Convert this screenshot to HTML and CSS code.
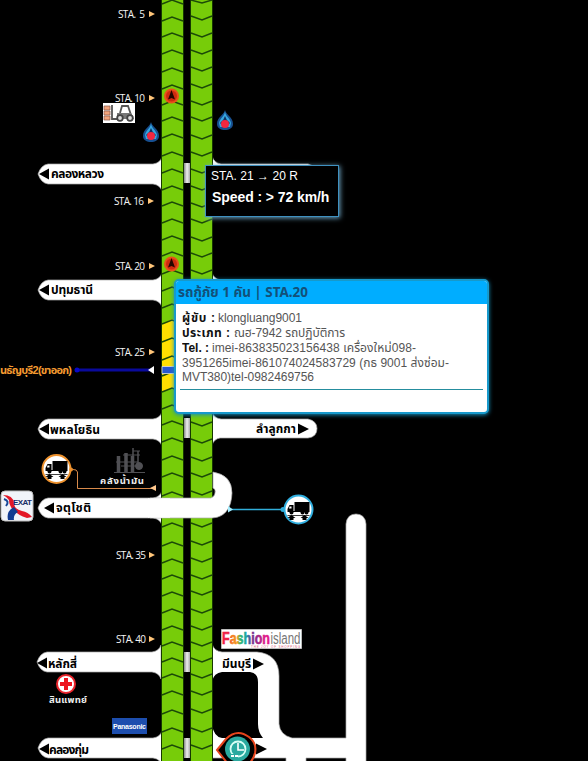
FILE: index.html
```
<!DOCTYPE html>
<html lang="th">
<head>
<meta charset="utf-8">
<title>Expressway map</title>
<link rel="stylesheet" href="styles.css">
</head>
<body>
<main class="map">
<svg class="canvas" width="588" height="761" viewBox="0 0 588 761">
  <defs>
    <path id="branch" d="M162 -17Q160 -11 153 -10H48Q41 -9 38 0Q41 9 48 10H153Q160 11 162 17Z"/>
    <path id="left-arrow" d="M0 0l10-5.500v11z"/>
    <path id="right-arrow" d="M0 0l-11-5.500v11z"/>
    <path id="station" d="M0-3l6 3-6 3z"/>
    <linearGradient id="bridge"><stop offset="0" stop-color="#888"/><stop offset=".5" stop-color="#eee"/><stop offset="1" stop-color="#aaa"/></linearGradient>
    <linearGradient id="rainbow"><stop offset=".14" stop-color="#ef2045"/><stop offset=".2" stop-color="#f37a24"/><stop offset=".32" stop-color="#f39a20"/><stop offset=".38" stop-color="#36b56a"/><stop offset=".5" stop-color="#19a6a8"/><stop offset=".62" stop-color="#70308f"/><stop offset=".75" stop-color="#a02888"/><stop offset=".9" stop-color="#e21888"/></linearGradient>
    <g id="rescue"><circle r="7.500" fill="#e9501a"/><circle r="5.500" fill="#cf2a10"/><path d="M0-6l3.500 9.500L0 2-3.500 3.500z" fill="#250500"/></g>
    <g id="flame"><path d="M0-10C1-5 8-3 8 4C8 8 4 10 0 10S-8 8-8 4C-8-3-1-5 0-10Z" fill="#174f90"/><path d="M0-9C0-4 5-2 6 3L5 7H-5L-6 3C-5-2 0-4 0-9Z" fill="#36a7df"/><path d="M0-4Q1 0 5 3L0 8-5 3Q-1 0 0-4Z" fill="#123060"/><circle cy="4" r="4" fill="#f22740"/></g>
    <g id="truck"><path d="M-4-8H11V1H-4zM-11-1l2-4h4v6h-6z"/><path d="M-9-3.500h2v2h-2.500z" fill="#fff"/><path d="M-11 1H11v1H-11zM-11 5H11v.8H-11z"/><circle cx="-7" cy="2.500" r="2"/><circle cx="4" cy="2.500" r="2"/><circle cx="8" cy="2.500" r="2"/><path d="M-7 5l4 3h-2v2h-4V8h-2zM6 5l4 3H8v2H4V8H2z"/></g>
  </defs>
  <g class="branch">
    <use href="#branch" y="174"/><use href="#branch" y="290"/><use href="#branch" y="429"/><use href="#branch" y="508"/><use href="#branch" y="662" x="-1"/><use href="#branch" y="748"/>
    <path d="M212 156Q214 163 221 164H308Q316 166 318 174Q316 183 308 184H212Z"/>
    <path d="M212 273Q214 279 221 280H318V299H212Z"/>
    <path d="M212 412Q214 418 221 419H308Q317 421 317 428.500Q317 437 308 438H220Q214 439 212 445Z"/>
    <path d="M212 644Q214 651 222 652H257Q279 654 279 676V724Q280 735 292 738H346V524Q347 514 356 514Q365 514 366 524V762H346V758H306V762H286V758H212Z"/>
  </g>
  <path d="M212 725Q214 737 222 738H263Q258 732 258 724V682Q258 673 250 672H222Q214 673 212 681Z"/>
  <g fill="#77cc09" stroke="#163800">
    <path d="M161.500-1h22v763h-22zM190.500-1h22v763h-22z"/>
  </g>
  <path fill="#ffe000" d="M162 324l10-5 11 4v67l-11-2-10 4z"/>
  <path class="chevrons" d="M162 4l10-4 11 4M162 21l10-4 11 4M162 37l10-4 11 4M162 54l10-4 11 4M162 72l10-4 11 4M162 89l10-4 11 4M162 105l10-4 11 4M162 121l10-4 11 4M162 138l10-4 11 4M162 156l10-4 11 4M162 173l10-4 11 4M162 190l10-4 11 4M162 206l10-4 11 4M162 223l10-4 11 4M162 240l10-4 11 4M162 256l10-4 11 4M162 274l10-4 11 4M162 291l10-4 11 4M162 308l10-4 11 4M162 324l10-4 11 4M162 342l10-4 11 4M162 360l10-4 11 4M162 376l10-4 11 4M162 392l10-4 11 4M162 409l10-4 11 4M162 425l10-4 11 4M162 442l10-4 11 4M162 460l10-4 11 4M162 477l10-4 11 4M162 496l10-4 11 4M162 527l10-4 11 4M162 546l10-4 11 4M162 563l10-4 11 4M162 579l10-4 11 4M162 596l10-4 11 4M162 613l10-4 11 4M162 630l10-4 11 4M162 646l10-4 11 4M162 662l10-4 11 4M162 678l10-4 11 4M162 695l10-4 11 4M162 714l10-4 11 4M162 732l10-4 11 4M162 749l10-4 11 4"/>
  <path class="chevrons" d="M191 0l11 3 10-3M191 16l11 4 10-4M191 33l11 4 10-4M191 50l11 4 10-4M191 67l11 4 10-4M191 84l11 4 10-4M191 101l11 4 10-4M191 117l11 4 10-4M191 135l11 4 10-4M191 152l11 4 10-4M191 169l11 4 10-4M191 186l11 4 10-4M191 203l11 4 10-4M191 219l11 4 10-4M191 237l11 4 10-4M191 253l11 4 10-4M191 270l11 4 10-4M191 422l11 4 10-4M191 439l11 4 10-4M191 457l11 4 10-4M191 473l11 4 10-4M191 491l11 4 10-4M191 523l11 4 10-4M191 541l11 4 10-4M191 558l11 4 10-4M191 575l11 4 10-4M191 591l11 4 10-4M191 609l11 4 10-4M191 626l11 4 10-4M191 642l11 4 10-4M191 658l11 4 10-4M191 674l11 4 10-4M191 691l11 4 10-4M191 709l11 4 10-4M191 728l11 4 10-4M191 745l11 4 10-4"/>
  <path fill="url(#bridge)" d="M184 163h6v20h-6zM184 418h6v20h-6zM184 652h6v20h-6zM184 738h6v20h-6z"/>
  <path class="ramp" d="M150 498H211Q215 496 215 493Q216 489 213 488V472Q232 475 232 493Q231 517 212 518H150Z"/>
  <path fill="#fff" d="M148 498.400h22v19.200h-22z"/>

  <use href="#left-arrow" x="39" y="174"/><use href="#left-arrow" x="39" y="290"/><use href="#left-arrow" x="39" y="429"/><use href="#left-arrow" x="44" y="508"/><use href="#left-arrow" x="37" y="663"/><use href="#left-arrow" x="39" y="749"/>
  <use href="#right-arrow" x="309" y="429"/><use href="#right-arrow" x="264" y="664"/><use href="#right-arrow" x="267" y="749"/>
  <g class="road-name">
    <text x="51" y="178" textLength="53">คลองหลวง</text><text x="51" y="294" textLength="42">ปทุมธานี</text><text x="50" y="434" textLength="50">พหลโยธิน</text><text x="56" y="512" textLength="35">จตุโชติ</text><text x="48" y="668" textLength="29">หลักสี่</text><text x="49" y="754" textLength="40">คลองกุ่ม</text><text x="256" y="433" textLength="40">ลำลูกกา</text><text x="222" y="668" textLength="29">มีนบุรี</text>
  </g>
  <g class="station-name">
    <text x="118" y="17.500" textLength="27" xml:space="preserve">STA.  5</text><text x="115" y="101.500" textLength="30">STA. 10</text><text x="114" y="204.500" textLength="30">STA. 16</text><text x="115" y="269.500" textLength="30">STA. 20</text><text x="115" y="355.500" textLength="30">STA. 25</text><text x="116" y="558.500" textLength="30">STA. 35</text><text x="116" y="642.500" textLength="30">STA. 40</text>
  </g>
  <g fill="#ffc579"><use href="#station" x="149" y="14"/><use href="#station" x="149" y="98"/><use href="#station" x="148" y="201"/><use href="#station" x="149" y="266"/><use href="#station" x="149" y="352"/><use href="#station" x="149" y="555"/><use href="#station" x="149" y="639"/></g>

  <use href="#rescue" x="171.500" y="96"/><use href="#rescue" x="171.500" y="264"/><use href="#flame" x="151" y="132"/><use href="#flame" x="225" y="120"/>
  <g transform="translate(103 103)"><path fill="#fff" d="M0 0h32v20H0z"/><path fill="#f0a27a" stroke="#865647" stroke-width=".7" d="M1 3h6v4H1zM1 8h6v4H1zM1 13h6v4H1z"/><path fill="none" stroke="#555" stroke-width="1.800" d="M9 2v14h5M17 10l2-7h6l3 9M14 13h14"/><path fill="#777" d="M14 10h14l3 6H14z"/><g fill="#ddd" stroke="#444" stroke-width="1.800"><circle cx="17" cy="15" r="2.800"/><circle cx="27" cy="15" r="2.800"/></g></g>
  <text class="route-name" x="0" y="374" textLength="72">นธัญบุรี2(ขาออก)</text>
  <path stroke="#0a0a9c" stroke-width="3" d="M76 370h76"/><circle cx="77" cy="370" r="2.500" fill="#0808c8"/><path fill="#fff" d="M148 370l6-4v8z"/><path fill="#2858ce" stroke="#ddd" stroke-width=".8" d="M162 366.500h21v7h-21z"/>
  <g fill="none" stroke="#d98a4a"><path d="M70 469l6 1 1.500 2v16.500H154"/></g><path fill="#ffc78d" d="M150 488l6-3v6z"/>
  <circle cx="56.500" cy="469" r="14" fill="#fff" stroke="#ed912d" stroke-width="2"/><use href="#truck" x="56.500" y="469"/><circle cx="71" cy="469.500" r="2" fill="#ed912d"/>
  <path stroke="#31aeda" stroke-width="1.300" d="M230 509.500h54"/><path fill="#a5edff" d="M228 506l5 3.500-5 3z"/><circle cx="283" cy="509.500" r="2.500" fill="#31aeda"/><circle cx="298.500" cy="509.500" r="14" fill="#fff" stroke="#30afe0" stroke-width="2"/><use href="#truck" x="298.500" y="510"/>
  <g fill="none" stroke="#505054"><path stroke-width="3.500" d="M118.500 472v-16M126 472v-19M132.500 472v-16"/><path d="M114 472.500h31M116 462h22M121 466h18M123 455h17M133 451h7"/><path stroke-width="1.500" d="M133 472v-24M138 464v-13"/><circle cx="139" cy="466" r="3.500" fill="#505054"/></g>
  <text class="small-name" x="100" y="484" textLength="44">คลังน้ำมัน</text>
  <g><rect x="1" y="491" width="32" height="30" rx="4" fill="#f1f4fa" stroke="#bbb"/><path d="M3 495Q13 495 14 503Q14 509 22 511Q28 512 32 517L27 518Q18 515 13 510Q9 505 9 500Q7 497 3 495Z" fill="#e31728"/><path d="M8 520Q6 511 14 507L18 512Q13 515 14 520Z" fill="#123b91"/><path d="M4 499Q10 501 6 506" fill="none" stroke="#174798" stroke-width="2"/><text class="exat" x="13" y="505" textLength="19">EXAT</text></g>
  <circle cx="66" cy="684" r="9" fill="#fff" stroke="#e9242b" stroke-width="2"/><path d="M64 678h4v4h4v4h-4v4h-4v-4h-4v-4h4z" fill="#ed1620"/><text class="small-name" x="49" y="703" textLength="38">สินแพทย์</text>
  <path d="M112 718h35v16h-35z" fill="#1d4eae"/><text class="panasonic" x="113" y="729" textLength="33">Panasonic</text>
  <path fill="#fff" stroke="#bbb" d="M221.500 629.500h80v19h-80z"/><text class="fashion" x="222" y="644" textLength="48" lengthAdjust="spacingAndGlyphs">Fashion</text><text class="island" x="270.500" y="644" textLength="30" lengthAdjust="spacingAndGlyphs">island</text><text class="slogan" x="251" y="648" textLength="49">THE JOY OF SHOPPING</text>
  <path d="M217 750L226 739Q237 728 249 737Q257 743 255 753Q253 761 248 764H228Z" stroke="#e5441c" stroke-width="2"/><circle cx="237.500" cy="749" r="12.500" fill="#2aa99f"/><circle cx="238" cy="749" r="7.500" fill="none" stroke="#d7fff5" stroke-width="1.800"/><path d="M238 743v7h6" fill="none" stroke="#fff" stroke-width="1.600"/><path d="M230 754h8v5h-8z" fill="#2aa99f"/><path d="M231 756h3m1 0h3" stroke="#fff" stroke-width="2"/>
</svg>
<aside class="speed"><div>STA. 21 → 20 R</div><strong>Speed : &gt; 72 km/h</strong></aside>
<section class="info">
  <h1><svg width="134" height="20"><text x="1" y="15" textLength="130" lengthAdjust="spacingAndGlyphs">รถกู้ภัย 1 คัน | STA.20</text></svg></h1>
  <div class="details">
    <svg width="275" height="76"><g><text y="12" textLength="33" class="label">ผู้ขับ :</text><text x="36" y="12" textLength="84">klongluang9001</text><text y="27" textLength="48" class="label">ประเภท :</text><text x="52" y="27" textLength="111">ณฮ-7942 รถปฏิบัติการ</text><text y="42" textLength="27" class="label">Tel. :</text><text x="30" y="42" textLength="204">imei-863835023156438 เครื่องใหม่098-</text><text y="57" textLength="267">3951265imei-861074024583729 (กธ 9001 ส่งซ่อม-</text><text y="71" textLength="132">MVT380)tel-0982469756</text></g></svg>
  </div>
</section>
</main>
</body>
</html>
```
FILE: styles.css
```
* { box-sizing: border-box; }
body { margin: 0; background: #000; font-family: "Liberation Sans", "Noto Sans Thai", Arial, sans-serif; }
.map { position: relative; width: 588px; height: 761px; overflow: hidden; background: #000; }
.canvas { display: block; }
.branch, .ramp { fill: #fff; stroke: #aaa; stroke-width: .7; }
.chevrons { fill: none; stroke: #1c4a08; stroke-width: 1.4; }
.road-name { font-size: 12px; font-weight: bold; }
.station-name { fill: #f4f4f4; font: 10px "Open Sans", sans-serif; }
.route-name { fill: #f39a30; font-size: 11px; font-weight: bold; }
.small-name { fill: #eee; font-size: 9.5px; font-weight: bold; }
.exat { fill: #172c67; font-size: 8px; font-weight: bold; }
.panasonic { fill: #fff; font-size: 7px; font-weight: bold; }
.fashion { fill: url(#rainbow); stroke: url(#rainbow); stroke-width: .6; font-size: 17px; font-weight: bold; }
.island { fill: #777; font-size: 16px; }
.slogan { fill: #dc5b7e; font-size: 3px; }
.speed { position: absolute; left: 205px; top: 165px; width: 134px; height: 52px; padding: 3px 5px; border: 1px solid #3f91c1; background: #000; color: #fff; box-shadow: 1px 1px 5px #70a9c8; font-size: 12px; line-height: 15px; white-space: nowrap; }
.speed div { letter-spacing: .03px; }
.speed strong { display: block; padding: 6px 1px; font-size: 14px; line-height: 15px; letter-spacing: -.08px; }
.info { position: absolute; left: 174px; top: 279px; width: 315px; height: 135px; border: 2px solid #1799cb; border-radius: 5px; background: #fff; box-shadow: 0 1px 4px #168eb9; overflow: hidden; }
.info h1 { height: 23px; margin: 0; padding: 1px; background: #00adff; }
.info h1 svg { display: block; fill: #135078; font: bold 14px "Noto Sans", "Noto Sans Thai", sans-serif; }
.details { height: 86px; margin: 0 4px; padding: 6px 2px; border-bottom: 1px solid #258d9e; }
.details svg { display: block; fill: #555; font-size: 12px; }
.details .label { fill: #111; font-weight: bold; }
```
